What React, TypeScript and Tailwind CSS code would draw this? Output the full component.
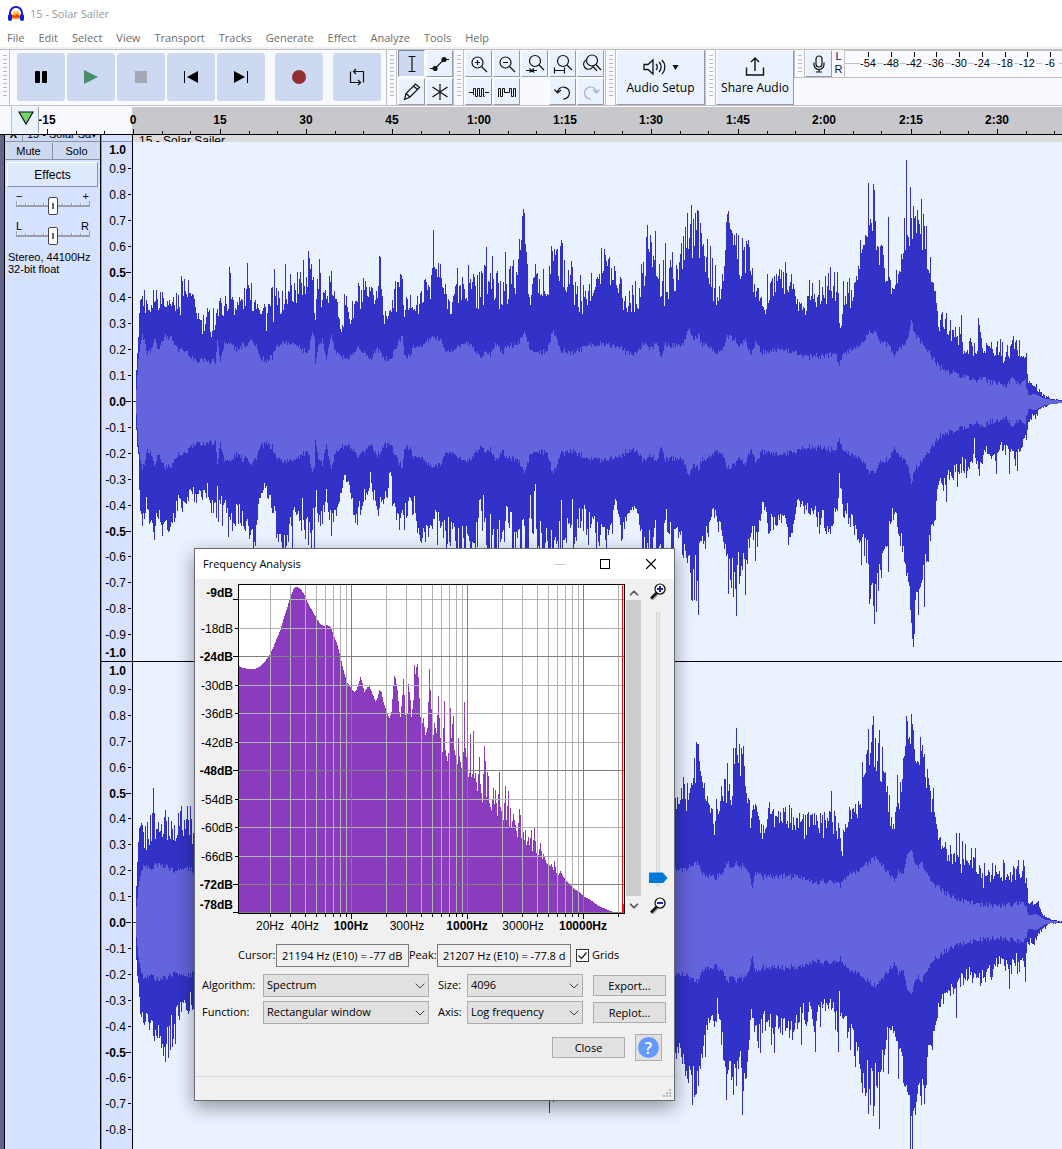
import React from 'react';
import { ChevronDown, ChevronUp, X } from 'lucide-react';

// ---------------------------------------------------------------------------
// Waveform data. Envelopes are flat lists of [x, near, far]: the column height
// at x falls somewhere between "near" and "far". Spikes are [x, y].
// ---------------------------------------------------------------------------

const LEFT_TOP = [
  136, 370, 368, 138, 335, 330, 139, 316, 310, 141, 300, 290, 150, 315, 296, 152, 302, 285, 160, 304, 290, 163, 302, 285,
  167, 306, 300, 175, 307, 295, 179, 315, 297, 181, 300, 276, 188, 300, 280, 193, 307, 297, 199, 323, 315, 202, 333, 320,
  209, 333, 310, 214, 325, 305, 220, 312, 300, 225, 312, 298, 230, 300, 275, 235, 312, 300, 245, 306, 290, 249, 305, 285,
  258, 307, 300, 262, 318, 302, 270, 327, 295, 275, 305, 290, 280, 310, 297, 288, 302, 290, 295, 298, 275, 300, 297, 275,
  305, 290, 270, 308, 280, 255, 312, 280, 262, 315, 327, 320, 318, 310, 270, 322, 292, 272, 326, 306, 295, 331, 290, 276,
  336, 310, 300, 342, 327, 300, 346, 303, 297, 350, 325, 310, 355, 310, 298, 358, 308, 288, 362, 310, 285, 370, 306, 292,
  377, 300, 285, 380, 290, 270, 384, 320, 310, 390, 310, 300, 396, 304, 285, 401, 278, 275, 405, 325, 300, 410, 305, 297,
  418, 313, 300, 423, 297, 285, 430, 290, 270, 433, 270, 265, 440, 285, 265, 444, 300, 285, 450, 310, 300, 460, 300, 275,
  470, 300, 280, 475, 300, 275, 482, 300, 270, 487, 290, 265, 492, 300, 270, 500, 308, 280, 508, 293, 265, 515, 288, 268,
  520, 263, 240, 523, 215, 209, 526, 265, 240, 529, 310, 300, 535, 275, 264, 540, 300, 285, 547, 308, 285, 551, 262, 250,
  555, 255, 250, 560, 285, 255, 565, 280, 250, 572, 290, 270, 578, 310, 290, 585, 305, 290, 592, 290, 275, 600, 275, 255,
  605, 275, 255, 613, 280, 262, 620, 290, 275, 626, 314, 295, 630, 305, 285, 637, 305, 288, 644, 290, 265, 648, 255, 235,
  655, 265, 250, 660, 300, 275, 667, 290, 260, 673, 290, 275, 680, 268, 250, 686, 245, 222, 692, 255, 225, 698, 245, 215,
  702, 255, 245, 708, 275, 245, 714, 295, 270, 718, 305, 290, 724, 280, 265, 728, 225, 218, 733, 250, 232, 740, 272, 240,
  748, 265, 245, 753, 290, 275, 760, 302, 295, 764, 316, 310, 770, 295, 285, 778, 290, 270, 785, 290, 270, 792, 290, 278,
  798, 310, 305, 805, 310, 295, 812, 300, 285, 820, 300, 285, 830, 295, 275, 836, 300, 275, 840, 328, 320, 845, 300, 290,
  850, 300, 280, 856, 283, 275, 863, 248, 240, 866, 240, 232, 871, 230, 218, 875, 240, 220, 880, 260, 240, 886, 278, 255,
  891, 295, 288, 897, 280, 270, 903, 255, 240, 908, 240, 220, 914, 237, 215, 920, 240, 213, 924, 245, 220, 930, 275, 260,
  935, 300, 290, 938, 333, 325, 942, 322, 312, 948, 335, 320, 953, 337, 327, 960, 345, 332, 966, 352, 338, 974, 352, 342,
  980, 348, 332, 986, 350, 340, 992, 354, 345, 1000, 352, 342, 1006, 365, 350, 1012, 352, 338, 1018, 354, 340, 1024, 360, 350,
  1026, 362, 352, 1028, 384, 381, 1035, 388, 383, 1040, 394, 391, 1045, 397, 395, 1050, 399, 398, 1062, 401, 400,
];
const LEFT_TOP_SPIKES = [
  229, 267, 247, 263, 274, 269, 285, 264, 303, 260, 308, 251, 309, 258, 379, 256, 380, 257, 433, 230, 486, 247, 492, 256,
  505, 252, 521, 240, 523, 209, 524, 213, 535, 264, 551, 246, 560, 246, 561, 240, 601, 248, 604, 249, 647, 225, 646, 237,
  655, 231, 665, 243, 672, 252, 687, 213, 691, 205, 697, 210, 698, 211, 726, 222, 727, 214, 728, 211, 731, 230, 736, 233,
  785, 262, 830, 267, 837, 272, 860, 240, 868, 183, 870, 219, 873, 184, 874, 190, 888, 217, 904, 218, 906, 160, 910, 187,
  913, 206, 917, 210, 921, 199, 924, 226, 961, 315, 978, 318, 979, 325, 181, 276, 188, 280, 290, 274, 320, 273, 329, 276,
  358, 283, 388, 316, 400, 274, 457, 268, 468, 265, 481, 271, 509, 269, 543, 269, 580, 275, 632, 285, 641, 264, 715, 265,
  767, 274, 778, 276, 791, 274, 809, 280, 825, 276, 840, 328, 841, 326, 843, 281, 849, 278,
];
const LEFT_BOTTOM = [
  136, 430, 432, 138, 455, 460, 139, 490, 500, 142, 520, 528, 146, 500, 510, 150, 515, 525, 154, 525, 540, 157, 505, 515,
  162, 520, 535, 170, 525, 530, 178, 500, 515, 182, 505, 512, 190, 488, 495, 198, 495, 505, 205, 485, 495, 212, 495, 510,
  216, 500, 515, 220, 500, 520, 228, 510, 520, 232, 510, 528, 240, 505, 520, 245, 515, 530, 252, 530, 546, 255, 540, 546,
  258, 500, 505, 263, 482, 490, 270, 497, 503, 275, 515, 540, 282, 545, 560, 287, 530, 545, 293, 510, 515, 300, 510, 525,
  307, 520, 540, 311, 530, 545, 315, 495, 510, 320, 515, 525, 328, 500, 510, 331, 520, 535, 338, 500, 505, 345, 470, 475,
  350, 490, 505, 357, 510, 525, 363, 495, 505, 370, 480, 490, 376, 500, 515, 382, 500, 505, 390, 475, 490, 394, 505, 515,
  400, 510, 530, 408, 500, 520, 415, 510, 520, 420, 540, 548, 430, 515, 530, 437, 515, 540, 443, 530, 550, 450, 520, 545,
  460, 530, 560, 470, 530, 555, 476, 530, 555, 480, 500, 510, 488, 530, 570, 500, 530, 560, 507, 510, 520, 515, 530, 560,
  525, 530, 560, 535, 500, 545, 540, 530, 560, 545, 530, 550, 555, 550, 600, 565, 520, 550, 575, 520, 540, 585, 510, 530,
  595, 520, 545, 600, 530, 545, 608, 530, 550, 615, 505, 520, 623, 530, 550, 630, 505, 510, 636, 508, 512, 643, 540, 555,
  655, 530, 570, 665, 520, 550, 672, 530, 560, 680, 530, 540, 687, 560, 580, 692, 570, 600, 697, 560, 590, 700, 535, 540,
  706, 530, 545, 712, 505, 510, 718, 520, 530, 724, 540, 550, 730, 560, 590, 735, 560, 590, 740, 560, 575, 745, 560, 585,
  750, 530, 540, 757, 530, 540, 763, 500, 505, 768, 520, 530, 778, 515, 525, 786, 520, 530, 792, 525, 540, 797, 498, 500,
  803, 505, 515, 812, 510, 520, 822, 515, 530, 830, 515, 530, 837, 510, 515, 839, 475, 480, 843, 500, 515, 850, 515, 530,
  860, 540, 550, 866, 540, 560, 870, 570, 595, 874, 575, 600, 880, 565, 580, 887, 540, 550, 891, 510, 520, 897, 515, 525,
  903, 550, 570, 908, 560, 590, 912, 600, 635, 917, 590, 610, 922, 570, 590, 925, 560, 580, 930, 535, 550, 934, 520, 530,
  938, 480, 485, 942, 480, 490, 950, 470, 480, 960, 460, 470, 967, 462, 475, 974, 450, 455, 979, 465, 473, 985, 450, 458,
  992, 450, 462, 1000, 445, 455, 1008, 450, 458, 1016, 455, 465, 1022, 445, 450, 1026, 430, 440, 1028, 420, 428,
  1035, 415, 420, 1040, 408, 410, 1050, 403, 404, 1062, 402, 402,
];
const LEFT_BOTTOM_SPIKES = [
  154, 540, 217, 486, 292, 549, 314, 548, 316, 490, 530, 495, 691, 600, 692, 601, 698, 615, 728, 594, 736, 616, 745, 595,
  839, 473, 869, 604, 874, 624, 876, 612, 888, 572, 910, 610, 913, 647, 914, 634, 918, 615, 924, 607, 946, 502, 957, 487,
  974, 438, 979, 476, 1009, 474, 1017, 471, 228, 537, 302, 498, 326, 489, 331, 536, 370, 472, 390, 472, 391, 476, 399, 530,
  414, 496, 479, 500, 483, 495, 506, 506, 534, 491, 561, 500, 572, 499, 588, 545, 616, 501, 755, 561, 757, 547, 768, 534,
  788, 545, 819, 534, 830, 534, 861, 565, 996, 474,
];
const LEFT_RMS = [
  136, 390, 138, 360, 140, 345, 142, 337, 144, 340, 147, 355, 151, 350, 154, 340, 158, 350, 161, 343, 165, 336, 172, 340,
  178, 350, 182, 347, 190, 357, 197, 360, 205, 361, 215, 362, 217, 342, 220, 360, 224, 345, 230, 342, 236, 350, 242, 345,
  246, 348, 251, 340, 256, 347, 260, 357, 266, 360, 272, 357, 276, 346, 283, 343, 290, 343, 297, 347, 303, 350, 308, 350,
  312, 335, 314, 337, 315, 362, 319, 342, 322, 340, 326, 358, 331, 338, 335, 350, 340, 357, 348, 358, 354, 351, 358, 345,
  363, 352, 371, 360, 376, 350, 379, 350, 382, 358, 390, 360, 399, 340, 402, 338, 404, 357, 410, 355, 414, 345, 420, 348,
  425, 342, 432, 336, 440, 341, 447, 352, 455, 350, 463, 342, 470, 345, 475, 350, 481, 358, 486, 350, 490, 355, 495, 345,
  502, 352, 508, 345, 515, 346, 520, 340, 524, 331, 530, 350, 537, 352, 545, 352, 549, 345, 552, 330, 556, 340, 560, 350,
  570, 353, 580, 350, 590, 346, 600, 344, 610, 346, 620, 348, 628, 354, 636, 353, 642, 345, 650, 348, 656, 345, 661, 355,
  665, 345, 672, 346, 682, 345, 686, 335, 690, 330, 694, 340, 698, 335, 702, 345, 710, 348, 716, 352, 722, 350, 727, 336,
  735, 340, 740, 345, 745, 340, 750, 354, 755, 343, 762, 352, 770, 350, 785, 350, 795, 353, 805, 357, 820, 356, 835, 354,
  839, 365, 844, 353, 852, 350, 862, 342, 870, 332, 874, 332, 880, 342, 888, 345, 894, 357, 900, 348, 907, 340, 911, 322,
  915, 335, 920, 342, 928, 350, 932, 358, 940, 368, 950, 372, 960, 376, 970, 378, 975, 383, 980, 377, 990, 382, 1000, 383,
  1006, 386, 1012, 378, 1018, 384, 1025, 380, 1028, 395, 1035, 394, 1045, 399, 1062, 401,
];

const RIGHT_TOP = [
  136, 885, 880, 139, 832, 824, 145, 845, 825, 152, 835, 815, 160, 838, 820, 170, 838, 815, 180, 830, 812, 190, 832, 812,
  195, 840, 820, 675, 812, 800, 680, 820, 798, 683, 795, 780, 686, 808, 790, 690, 790, 770, 694, 788, 757, 697, 760, 745,
  700, 775, 760, 704, 795, 785, 710, 812, 808, 716, 828, 805, 721, 805, 795, 726, 800, 775, 731, 805, 792, 735, 765, 750,
  738, 765, 742, 742, 772, 750, 745, 780, 762, 750, 824, 808, 756, 806, 803, 762, 842, 830, 768, 814, 805, 778, 827, 815,
  785, 824, 810, 795, 824, 810, 802, 840, 820, 810, 827, 815, 820, 832, 815, 825, 835, 818, 832, 826, 808, 838, 835, 820,
  842, 850, 830, 847, 825, 812, 852, 815, 808, 858, 815, 803, 863, 790, 768, 867, 760, 745, 872, 760, 735, 876, 767, 745,
  880, 775, 755, 884, 785, 770, 890, 820, 805, 894, 830, 820, 900, 800, 785, 905, 752, 745, 908, 748, 740, 912, 750, 730,
  918, 768, 752, 923, 765, 748, 928, 795, 775, 934, 818, 810, 938, 840, 830, 944, 854, 845, 950, 862, 848, 955, 867, 857,
  962, 872, 860, 968, 866, 850, 975, 868, 855, 982, 877, 865, 990, 877, 864, 997, 882, 870, 1005, 877, 865, 1015, 877, 867,
  1022, 878, 866, 1026, 885, 875, 1028, 904, 902, 1033, 904, 900, 1038, 906, 902, 1042, 915, 914, 1050, 920, 919, 1062, 922, 921,
];
const RIGHT_TOP_SPIKES = [
  153, 788, 150, 815, 165, 810, 677, 797, 683, 777, 694, 758, 696, 742, 698, 744, 727, 763, 733, 748, 736, 728, 739, 744,
  743, 746, 831, 791, 862, 762, 868, 729, 873, 716, 872, 725, 879, 730, 882, 747, 897, 775, 900, 782, 906, 716, 907, 721,
  911, 714, 912, 724, 920, 737, 922, 745, 933, 788, 956, 833, 959, 833, 962, 841, 965, 844, 975, 848, 1003, 860, 1018, 860,
  1023, 860, 1024, 866, 842, 856, 714, 835, 983, 888, 769, 802, 784, 812, 791, 808, 803, 814, 814, 813, 721, 786, 755, 804,
];
const RIGHT_BOTTOM = [
  136, 960, 962, 140, 1010, 1020, 150, 1020, 1030, 156, 1030, 1045, 163, 1035, 1058, 170, 1025, 1050, 178, 1010, 1030,
  187, 1000, 1018, 195, 995, 1012, 548, 1100, 1102, 675, 1050, 1060, 680, 1045, 1055, 687, 1070, 1080, 693, 1070, 1095,
  698, 1075, 1085, 703, 1030, 1045, 710, 1015, 1020, 716, 1020, 1040, 718, 1008, 1015, 722, 1035, 1050, 727, 1070, 1085,
  733, 1060, 1085, 740, 1060, 1080, 745, 1080, 1090, 748, 1050, 1060, 751, 1008, 1010, 757, 1030, 1050, 763, 1015, 1025,
  770, 1020, 1040, 780, 1022, 1035, 790, 1020, 1040, 800, 1010, 1020, 808, 1008, 1030, 816, 1010, 1030, 824, 1003, 1015,
  830, 1003, 1015, 838, 1015, 1040, 842, 1010, 1020, 850, 1030, 1045, 858, 1040, 1060, 863, 1075, 1090, 868, 1065, 1095,
  874, 1075, 1100, 880, 1065, 1090, 885, 1035, 1050, 890, 1030, 1045, 894, 1025, 1030, 898, 1050, 1060, 903, 1055, 1080,
  907, 1095, 1105, 911, 1105, 1125, 916, 1095, 1108, 921, 1080, 1100, 925, 1090, 1100, 928, 1045, 1050, 933, 1030, 1040,
  938, 1000, 1010, 945, 992, 1000, 952, 985, 995, 960, 975, 985, 970, 970, 980, 980, 972, 983, 990, 968, 980, 998, 958, 965,
  1005, 963, 972, 1015, 958, 972, 1025, 963, 970, 1027, 940, 945, 1033, 940, 945, 1040, 930, 932, 1050, 923, 924, 1062, 923, 923,
];
const RIGHT_BOTTOM_SPIKES = [
  165, 1062, 549, 1113, 553, 1102, 692, 1105, 717, 998, 726, 1100, 733, 1095, 742, 1115, 838, 1052, 839, 991, 862, 1093,
  868, 1114, 873, 1116, 879, 1129, 888, 1074, 898, 1079, 910, 1149, 912, 1149, 956, 1018, 1009, 989, 1025, 982,
  705, 1057, 760, 1053, 774, 1053, 815, 1052, 855, 1067, 801, 1045, 932, 1050,
];
const RIGHT_RMS = [
  136, 905, 138, 885, 143, 865, 150, 868, 157, 865, 165, 866, 175, 872, 185, 867, 195, 872, 675, 870, 685, 870, 692, 863,
  697, 863, 702, 873, 710, 877, 716, 877, 722, 872, 727, 862, 732, 870, 736, 862, 740, 868, 743, 864, 748, 873, 752, 887,
  755, 872, 762, 877, 785, 876, 800, 878, 815, 882, 835, 882, 840, 885, 848, 876, 856, 872, 863, 866, 868, 863, 875, 858,
  880, 862, 887, 872, 895, 881, 898, 870, 902, 875, 906, 858, 911, 851, 917, 868, 922, 863, 928, 878, 935, 885, 945, 893,
  960, 900, 975, 903, 985, 905, 1000, 905, 1008, 905, 1015, 903, 1025, 905, 1028, 915, 1036, 914, 1045, 920, 1062, 922,
];

const WAVE_START = 136;
const WAVE_END = 1062;

const noise = (n: number) => {
  const v = Math.sin(n * 127.1 + 311.7) * 43758.5453;
  return v - Math.floor(v);
};

// Linear interpolation over a flat list with `size` numbers per entry
const sample = (list: number[], size: number, x: number, field: number) => {
  let i = 0;
  while (i + size < list.length && list[i + size] <= x) i += size;
  if (i + size >= list.length) return list[i + field];
  const t = Math.max(0, (x - list[i]) / (list[i + size] - list[i]));
  return list[i + field] + (list[i + size + field] - list[i + field]) * t;
};

const peakColumns = (env: number[], spikes: number[], seed: number) => {
  const out: number[] = [];
  for (let x = WAVE_START; x < WAVE_END; x++) {
    const near = sample(env, 3, x, 1);
    const far = sample(env, 3, x, 2);
    const r = noise(x + seed);
    out.push(Math.round(near + (far - near) * (r * 1.8 - 0.45)));
  }
  for (let i = 0; i < spikes.length; i += 2) out[spikes[i] - WAVE_START] = spikes[i + 1];
  return out;
};

const rmsColumns = (env: number[], seed: number) => {
  const out: number[] = [];
  for (let x = WAVE_START; x < WAVE_END; x++) {
    const wobble = x < 1027 ? (noise(x + seed) - 0.5) * 6 : 0;
    out.push(Math.round(sample(env, 2, x, 1) + wobble));
  }
  return out;
};

const bandPath = (top: number[], bottom: number[]) => {
  let d = `M${WAVE_START} ${top[0]}`;
  top.forEach((y, i) => (d += `V${y}H${WAVE_START + i + 1}`));
  for (let i = bottom.length - 1; i >= 0; i--) d += `V${bottom[i]}H${WAVE_START + i}`;
  return d + 'Z';
};

const mirror = (cols: number[], centre: number) => cols.map((y) => centre * 2 - y);

const leftRms = rmsColumns(LEFT_RMS, 11);
const rightRms = rmsColumns(RIGHT_RMS, 57);

const CHANNELS = [
  {
    centre: 401,
    labels: 21,
    peak: bandPath(peakColumns(LEFT_TOP, LEFT_TOP_SPIKES, 1), peakColumns(LEFT_BOTTOM, LEFT_BOTTOM_SPIKES, 900)),
    rms: bandPath(leftRms, mirror(leftRms, 402)),
  },
  {
    centre: 922,
    labels: 19,
    peak: bandPath(peakColumns(RIGHT_TOP, RIGHT_TOP_SPIKES, 333), peakColumns(RIGHT_BOTTOM, RIGHT_BOTTOM_SPIKES, 77)),
    rms: bandPath(rightRms, mirror(rightRms, 922)),
  },
];

// Spectrum outline, [x, y]
const SPECTRUM = [
  239, 666, 243, 668, 248, 669, 254, 669, 259, 667, 263, 663, 267, 658, 270, 653, 273, 647, 276, 639, 280, 630, 283, 619,
  286, 610, 289, 600, 291, 594, 293, 589, 295, 587, 297, 587, 300, 589, 303, 593, 305, 597, 308, 604, 312, 611, 316, 618,
  319, 623, 323, 626, 327, 625, 330, 627, 333, 634, 337, 645, 340, 657, 343, 670, 346, 681, 349, 686, 352, 690, 354, 692,
  356, 690, 358, 684, 360, 677, 362, 683, 364, 692, 367, 687, 369, 686, 372, 694, 375, 701, 377, 698, 379, 690, 381, 692,
  383, 702, 386, 711, 389, 718, 391, 712, 393, 685, 394, 676, 395, 678, 397, 690, 399, 712, 400, 717, 402, 695, 403, 679,
  404, 695, 405, 715, 407, 714, 408, 684, 410, 700, 411, 717, 413, 700, 414, 665, 415, 674, 416, 667, 417, 664, 418, 677,
  419, 698, 420, 717, 422, 723, 423, 718, 425, 735, 427, 728, 428, 702, 429, 669, 430, 690, 431, 709, 433, 735, 434, 723,
  436, 733, 437, 715, 438, 696, 439, 718, 440, 738, 442, 752, 443, 728, 444, 701, 445, 750, 447, 761, 449, 745, 450, 708,
  451, 738, 452, 724, 453, 716, 454, 750, 457, 764, 458, 738, 459, 756, 461, 768, 463, 752, 464, 702, 465, 748, 467, 765,
  468, 777, 469, 773, 470, 734, 471, 777, 472, 774, 473, 731, 474, 778, 475, 773, 477, 791, 479, 757, 480, 784, 482, 802,
  484, 746, 485, 761, 486, 797, 487, 772, 488, 776, 489, 803, 491, 810, 493, 788, 494, 804, 495, 790, 497, 816, 499, 772,
  500, 807, 503, 820, 505, 786, 506, 820, 508, 791, 509, 826, 510, 808, 511, 827, 513, 814, 515, 825, 517, 837, 519, 809,
  520, 815, 521, 838, 522, 824, 524, 840, 525, 830, 526, 845, 528, 837, 529, 845, 531, 830, 532, 851, 534, 828, 536, 853,
  538, 855, 540, 843, 542, 859, 543, 854, 546, 863, 550, 866, 551, 864, 553, 870, 554, 861, 556, 873, 558, 875, 560, 871,
  563, 877, 566, 881, 570, 885, 573, 888, 577, 891, 580, 893, 583, 896, 590, 900, 597, 905, 603, 908, 610, 911, 614, 912,
];

// One column per pixel: slopes on the smooth low end, plain bars above 380
const spectrumPath = () => {
  let d = 'M239 913';
  for (let x = 239; x < 618; x++) {
    const exact = SPECTRUM.findIndex((v, i) => i % 2 === 0 && v === x);
    const y = exact >= 0 ? SPECTRUM[exact + 1] : Math.round(sample(SPECTRUM, 2, x, 1));
    d += `V${y}H${x + 1}`;
  }
  return d + 'V913Z';
};

const DECIBELS = [-9, -18, -24, -30, -36, -42, -48, -54, -60, -66, -72, -78];
const DB_LINES = [599, 628, 656, 685, 713, 742, 770, 799, 827, 856, 884, 912];
const DB_BOLD = [-9, -24, -48, -72, -78];
const FREQ_LABELS = [
  { text: '20Hz', x: 270, bold: false },
  { text: '40Hz', x: 305, bold: false },
  { text: '100Hz', x: 351, bold: true },
  { text: '300Hz', x: 407, bold: false },
  { text: '1000Hz', x: 467, bold: true },
  { text: '3000Hz', x: 523, bold: false },
  { text: '10000Hz', x: 583, bold: true },
];
const FREQ_LINES = [10, 100, 1000, 10000].flatMap((decade) =>
  [1, 2, 3, 4, 5, 6, 7, 8, 9]
    .map((n) => n * decade)
    .filter((f) => f > 15 && f < 21000)
    .map((f) => ({ x: Math.round(351 + 116 * (Math.log10(f) - 2)), major: f === decade }))
);

const MENUS = ['File', 'Edit', 'Select', 'View', 'Transport', 'Tracks', 'Generate', 'Effect', 'Analyze', 'Tools', 'Help'];
const TIMES = ['-15', '0', '15', '30', '45', '1:00', '1:15', '1:30', '1:45', '2:00', '2:15', '2:30'];

// ---------------------------------------------------------------------------
// Toolbar
// ---------------------------------------------------------------------------

const Grabber: React.FC<{ lines?: number }> = ({ lines = 11 }) => (
  <div className="flex w-[10px] shrink-0 flex-col items-center gap-[3px] border-r border-[#c0c0c0] pt-[5px]">
    {Array.from({ length: lines }, (_, i) => (
      <div key={i} className="h-px w-1 shrink-0 bg-[#b9bcc6]" />
    ))}
  </div>
);

const TransportButton: React.FC<{ label: string; children: React.ReactNode }> = ({ label, children }) => (
  <button aria-label={label} className="flex size-12 items-center justify-center rounded-[3px] bg-[#cdd9f1]">
    <svg width="24" height="24" viewBox="0 0 24 24">{children}</svg>
  </button>
);

const ToolButton: React.FC<{ label: string; active?: boolean; children: React.ReactNode }> = ({ label, active, children }) => (
  <button
    aria-label={label}
    className={`flex size-[27px] items-center justify-center border ${
      active ? 'border-[#7b859f] border-r-white border-b-white bg-[#cdd9f1]' : 'border-white border-r-[#939bb0] border-b-[#939bb0] bg-[#eaf1ff]'
    }`}
  >
    <svg width="24" height="24" viewBox="0 0 24 24" fill="none" stroke="#111" strokeWidth="1.2">
      {children}
    </svg>
  </button>
);

const Toolbar = () => (
  <div className="flex h-[57px] shrink-0 overflow-hidden border-y border-[#c0c0c0] bg-[#f8faff]">
    <Grabber />
    <div className="flex shrink-0 items-start gap-[2px] pt-[3px] pr-[5px] pl-[7px]">
      <TransportButton label="Pause">
        <rect x="6" y="6" width="5" height="12" rx="1" />
        <rect x="13" y="6" width="5" height="12" rx="1" />
      </TransportButton>
      <TransportButton label="Play">
        <path d="M5 5v14l14-7z" fill="#4a8d6e" />
      </TransportButton>
      <TransportButton label="Stop">
        <rect x="6" y="6" width="12" height="12" fill="#a5a9b5" />
      </TransportButton>
      <TransportButton label="Skip to Start">
        <path d="M5 6h1v12H5zM19 6v12L8 12z" />
      </TransportButton>
      <TransportButton label="Skip to End">
        <path d="M18 6h1v12h-1zM5 6v12l11-6z" />
      </TransportButton>
      <div className="mx-2">
        <TransportButton label="Record">
          <circle cx="12" cy="12" r="7" fill="#932f30" />
        </TransportButton>
      </div>
      <TransportButton label="Loop">
        <path
          d="M8.5 6.500H18.500V17.500M15.500 17.500H5.500V6.500M11 4L8.500 6.500L11 9M13 15L15.500 17.500L13 20"
          fill="none"
          stroke="#111"
          strokeWidth="1.200"
        />
      </TransportButton>
    </div>
    <div className="flex shrink-0 border-l border-[#c0c0c0]">
      <Grabber />
      <div className="grid shrink-0 grid-cols-2 content-start gap-px pl-px">
        <ToolButton label="Selection Tool" active>
          <path d="M8.500 4.500h7M8.500 19.500h7M12 4.500v15" />
        </ToolButton>
        <ToolButton label="Envelope Tool">
          <path d="M2 16.500h5L16 7.500h5" />
          <circle cx="7" cy="16.500" r="2" fill="#111" />
          <circle cx="16" cy="7.500" r="2" fill="#111" />
        </ToolButton>
        <ToolButton label="Draw Tool">
          <path d="M4.500 19.500l1.500-6L15.500 4l4 3.500L10 17zM13.500 6l4 3.500M6 13.500l4 3.500" />
        </ToolButton>
        <ToolButton label="Multi-Tool">
          <path d="M12 4v16M4.500 7l15 10M19.500 7l-15 10" />
        </ToolButton>
      </div>
    </div>
    <div className="flex shrink-0 border-l border-[#c0c0c0]">
      <Grabber />
      <div className="grid shrink-0 grid-cols-5 content-start gap-px px-px">
        <ToolButton label="Zoom In">
          <circle cx="10.500" cy="10.500" r="5.500" />
          <path d="M14.500 14.500l5.500 5.500M8 10.500h5M10.500 8v5" />
        </ToolButton>
        <ToolButton label="Zoom Out">
          <circle cx="10.500" cy="10.500" r="5.500" />
          <path d="M14.500 14.500l5.500 5.500M8 10.500h5" />
        </ToolButton>
        <ToolButton label="Fit Selection to Width">
          <circle cx="12" cy="9" r="5.500" />
          <path d="M16 13l5 5M3 18.500h5M9 18.500h5M6.500 16.500l2 2-2 2M11 16.500l-2 2 2 2" />
        </ToolButton>
        <ToolButton label="Fit Project to Width">
          <circle cx="12" cy="9" r="5.500" />
          <path d="M16 13l5 5M3.500 18.500h10M3.500 15.500v6M13.500 15.500v6" />
        </ToolButton>
        <ToolButton label="Zoom Toggle">
          <circle cx="13" cy="8.500" r="5.500" />
          <path d="M17 12.500l5 5.500M8 7.500a5 5 0 1 0 6 7l4 4.500M14 14.500l4 4.500" />
        </ToolButton>
        <ToolButton label="Trim">
          <path d="M2 12.500h4M18 12.500h4M6.500 15V8.500h2v8h2v-8h2v8h2v-8h2v8h1" strokeWidth="1" />
        </ToolButton>
        <ToolButton label="Silence">
          <path d="M3.500 17V8.500h2v8h2v-8h2v4h5v-4h2v8h2v-8h2V17" strokeWidth="1" />
        </ToolButton>
        <div />
        <ToolButton label="Undo">
          <path d="M12 19h1a6 6 0 1 0-6.500-6.500M3.500 9.500l3 3.500 3.500-3" />
        </ToolButton>
        <ToolButton label="Redo">
          <path d="M12 19h-1a6 6 0 1 1 6.500-6.500M20.500 9.500l-3 3.500-3.500-3" stroke="#aab0bd" />
        </ToolButton>
      </div>
    </div>
    <div className="flex shrink-0 border-l border-[#c0c0c0]">
      <Grabber />
      <button className="flex w-[89px] flex-col items-center border border-white border-r-[#939bb0] border-b-[#939bb0] bg-[#eaf1ff] pt-[3px] font-['Open_Sans',sans-serif] text-[12px] leading-4">
        <svg width="40" height="26" viewBox="0 0 40 26" fill="none" stroke="#111" strokeWidth="1.300">
          <path d="M3 10.500h4l5-4.500v14l-5-4.500h-4zM15 10a4 4 0 0 1 0 6M18 8a7 7 0 0 1 0 10M21 6a10 10 0 0 1 0 14" />
          <path d="M31.500 11h6l-3 5z" fill="#111" stroke="none" />
        </svg>
        Audio Setup
      </button>
    </div>
    <div className="flex shrink-0 border-l border-[#c0c0c0]">
      <Grabber />
      <button className="flex w-[78px] flex-col items-center border border-white border-r-[#939bb0] border-b-[#939bb0] bg-[#eaf1ff] pt-[3px] font-['Open_Sans',sans-serif] text-[12px] leading-4">
        <svg width="24" height="26" viewBox="0 0 24 26" fill="none" stroke="#111" strokeWidth="1.400">
          <path d="M3.500 13.500v7.500h17v-7.500M12 17V4.500M8 8l4-4 4 4" />
        </svg>
        <span className="whitespace-nowrap">Share Audio</span>
      </button>
    </div>
    <div className="flex h-7 min-w-0 flex-1 border-b border-l border-[#c0c0c0]">
      <Grabber lines={5} />
      <ToolButton label="Record Meter">
        <rect x="9" y="4" width="6" height="11" rx="3" />
        <path d="M7 10.500v2a5 5 0 0 0 10 0v-2M12 17.500v2.500M9 20h6" />
      </ToolButton>
      <div className="flex w-3 flex-col items-center pl-px font-['Liberation_Sans',sans-serif] text-[11px] leading-[13px] text-[#101040]">
        <span>L</span>
        <span>R</span>
      </div>
      <svg className="h-full min-w-0 flex-1 font-['Liberation_Sans',sans-serif] text-[11px]" shapeRendering="crispEdges">
        <path d="M0 .5H400M.5 0V28M0 13.500H400" stroke="#c0c0c0" fill="none" />
        {[-54, -48, -42, -36, -30, -24, -18, -12, -6].map((db, i) => (
          <g key={db}>
            <path d={`M${Math.round(24 + i * 22.750)}.5 2v5`} stroke="#000" />
            <rect x={Math.round(24 + i * 22.750) - 8} y="12" width="17" height="3" fill="#f8faff" />
            <text x={Math.round(24 + i * 22.750)} y="17" textAnchor="middle">
              {db}
            </text>
          </g>
        ))}
      </svg>
    </div>
  </div>
);

// ---------------------------------------------------------------------------
// Tracks
// ---------------------------------------------------------------------------

const Timeline = () => (
  <div className="flex h-[29px] shrink-0 border-b border-black bg-[#f8faff]">
    <div className="w-3 shrink-0 border-r border-[#c0c0c0]" />
    <button aria-label="Pin play head" className="my-px flex w-[27px] shrink-0 justify-center border-r border-[#939bb0] bg-[#eaf1ff] pt-1 pl-[2px]">
      <svg width="16" height="14" viewBox="0 0 16 14">
        <path d="M1 1h14L8 13z" fill="#74d46c" stroke="#111" strokeWidth="1.200" />
      </svg>
    </button>
    <svg className="h-full min-w-0 flex-1 font-['Liberation_Sans',sans-serif] text-[12px] font-bold" shapeRendering="crispEdges">
      <rect x="93" y="1" width="3000" height="27" fill="#c8c8cc" />
      {TIMES.map((t, i) => {
        const x = Math.round(8 + i * 86.350);
        return (
          <g key={t}>
            <text x={x} y="18" textAnchor="middle">
              {t}
            </text>
            <path d={`M${x}.5 23v5M${x + 29}.5 25v3M${x + 57}.5 25v3`} stroke="#000" />
          </g>
        );
      })}
    </svg>
  </div>
);

const TrackSlider: React.FC<{ label: string; low: string; high: string }> = ({ label, low, high }) => (
  <div className="relative mx-[10px] h-[30px] text-[11px] leading-[13px]">
    <div className="flex justify-between px-px">
      <span>{low}</span>
      <span>{high}</span>
    </div>
    <svg className="absolute inset-x-0 top-[10px] h-[7px] w-full" shapeRendering="crispEdges">
      <path d="M1 6h76" stroke="#9a9fa8" strokeWidth="2" />
      <path d="M2.500 1v4M11.500 3v2M20.500 3v2M29.500 3v2M48.500 3v2M57.500 3v2M66.500 3v2M75.500 1v4" stroke="#fff" />
      <path d="M1.500 1v4M10.500 3v2M19.500 3v2M28.500 3v2M47.500 3v2M56.500 3v2M65.500 3v2M74.500 1v4" stroke="#9a9fa8" />
    </svg>
    <input
      type="range"
      aria-label={label}
      defaultValue={50}
      className="absolute inset-x-0 top-[6px] h-5 w-full appearance-none bg-transparent [&::-webkit-slider-thumb]:h-[18px] [&::-webkit-slider-thumb]:w-[10px] [&::-webkit-slider-thumb]:appearance-none [&::-webkit-slider-thumb]:rounded-[2px] [&::-webkit-slider-thumb]:border [&::-webkit-slider-thumb]:border-[#444] [&::-webkit-slider-thumb]:bg-[linear-gradient(#666,#666)] [&::-webkit-slider-thumb]:bg-[length:2px_6px] [&::-webkit-slider-thumb]:bg-center [&::-webkit-slider-thumb]:bg-no-repeat [&::-webkit-slider-thumb]:bg-white"
    />
  </div>
);

const TrackPanel = () => (
  <div className="flex w-[96px] shrink-0 flex-col border-r border-black bg-[#d6e2ff] font-['Liberation_Sans',sans-serif] text-[11px]">
    <div className="flex h-[7px] items-end overflow-hidden border-b border-[#8a8fa3] bg-[#cdd9f1] leading-[14px]">
      <span className="w-[18px] border-r border-[#8a8fa3] text-center font-bold">X</span>
      <span className="flex-1 pl-1">15 - Solar Sa▾</span>
    </div>
    <div className="flex h-[18px] shrink-0 border-b border-[#8a8fa3] bg-[#cdd9f1] pt-px">
      <button className="w-[48px] border-r border-[#8a8fa3]">Mute</button>
      <button className="flex-1">Solo</button>
    </div>
    <button className="mx-[2px] mt-[2px] mb-[3px] h-[25px] shrink-0 border border-white border-r-[#8a8fa3] border-b-[#8a8fa3] bg-[#e0eaff] text-[12px]">
      Effects
    </button>
    <TrackSlider label="Gain" low="−" high="+" />
    <TrackSlider label="Pan" low="L" high="R" />
    <p className="px-[3px] pt-px leading-3">
      Stereo, 44100Hz
      <br />
      32-bit float
    </p>
  </div>
);

const AmplitudeRuler = () => (
  <svg className="w-[31px] shrink-0 bg-[#d6e2ff] font-['Liberation_Sans',sans-serif] text-[12px]" shapeRendering="crispEdges">
    <path d="M.5 0V1200M0 6.500h31" stroke="#8a8fa3" />
    <path d="M0 526.500h31" stroke="#000" />
    <g transform="translate(0,-135)">
      {CHANNELS.map(({ centre, labels }) =>
        Array.from({ length: labels }, (_, i) => {
          const value = (10 - i) / 10;
          const y = Math.round(centre - value * 259);
          const major = i % 5 === 0;
          const textY = i === 0 ? y + 12 : i === 20 ? y - 3 : y + 5;
          return (
            <g key={`${centre}${i}`}>
              <text x="25" y={textY} textAnchor="end" fontWeight={major ? 700 : 400}>
                {value.toFixed(1)}
              </text>
              {i > 0 && i < 20 && <path d={`M${major ? 25 : 27} ${y}.5H30`} stroke="#000" />}
            </g>
          );
        })
      )}
    </g>
  </svg>
);

const Waveforms = () => (
  <div className="flex min-w-0 flex-1 flex-col border-l border-black bg-[#eaf1ff]">
    <div className="flex h-[7px] shrink-0 items-start overflow-hidden bg-[#dcdcdc] pl-[6px] font-['Liberation_Sans',sans-serif] text-[12px] leading-3">
      15 - Solar Sailer
    </div>
    <svg className="min-h-0 w-full flex-1" shapeRendering="crispEdges">
      <g transform="translate(-133,-142)">
        {CHANNELS.map(({ centre, peak, rms }) => (
          <g key={centre}>
            <path d={`M133 ${centre}.5h930`} stroke="#3232c8" />
            <path d={peak} fill="#3232c8" />
            <path d={rms} fill="#6464dc" />
          </g>
        ))}
        <path d="M133 661.500h2000" stroke="#000" />
      </g>
    </svg>
  </div>
);

// ---------------------------------------------------------------------------
// Frequency Analysis window
// ---------------------------------------------------------------------------

const Magnifier: React.FC<{ plus?: boolean }> = ({ plus }) => (
  <svg width="18" height="18" viewBox="0 0 18 18">
    <path d="M3 16.500l6-6" stroke="#b0b0b0" strokeWidth="3" />
    <path d="M2 15.500l6-6" stroke="#111" strokeWidth="2.500" />
    <circle cx="11.500" cy="6.500" r="5" fill="#f4f4ff" stroke="#a8a8a8" />
    <circle cx="11" cy="6" r="5" fill="#f4f4ff" stroke="#111" strokeWidth="1.200" />
    <path d={plus ? 'M8 6h6M11 3v6' : 'M8 6h6'} stroke="#2424a8" strokeWidth="2" />
  </svg>
);

const SpectrumPlot = () => (
  <svg className="h-[356px] w-[431px] shrink-0 font-['Liberation_Sans',sans-serif] text-[12px]" shapeRendering="crispEdges">
    <g transform="translate(-195,-579)">
      <rect x="238.500" y="584.500" width="386" height="329" fill="#fff" stroke="#000" />
      <path d={spectrumPath()} fill="#8b3bbd" />
      {FREQ_LINES.filter((l) => !l.major).map(({ x }) => (
        <path key={x} d={`M${x}.5 585V913`} stroke="#b2b2b2" />
      ))}
      {DB_LINES.map((y, i) => (
        <path key={y} d={`M239 ${y}.5H624`} stroke={i > 0 && DB_BOLD.includes(DECIBELS[i]) ? '#7f7f7f' : '#b2b2b2'} />
      ))}
      {FREQ_LINES.filter((l) => l.major).map(({ x }) => (
        <path key={x} d={`M${x}.5 585V913`} stroke="#7f7f7f" />
      ))}
      <path d="M622.500 585V913" stroke="#f00" />
      <path d="M623.500 904V912" stroke="#8b3bbd" />
      <path d="M238 913.500H625" stroke="#000" />
      {FREQ_LINES.map(({ x, major }) => (
        <path key={x} d={`M${x}.5 914v${major ? 5 : 3}`} stroke="#000" />
      ))}
      {DECIBELS.map((db, i) => {
        const bold = DB_BOLD.includes(db);
        const y = DB_LINES[i];
        const textY = i === 0 ? 597 : i === DECIBELS.length - 1 ? 909 : y + 5;
        return (
          <g key={db}>
            <text x="233" y={textY} textAnchor="end" fontWeight={bold ? 700 : 400}>
              {db}dB
            </text>
            <path d={`M${bold ? 233 : 235} ${y}.5H238`} stroke="#000" />
          </g>
        );
      })}
      {FREQ_LABELS.map(({ text, x, bold }) => (
        <text key={text} x={x} y="930" textAnchor="middle" fontWeight={bold ? 700 : 400}>
          {text}
        </text>
      ))}
    </g>
  </svg>
);

const Choice: React.FC<{ id: string; value: string; width: string }> = ({ id, value, width }) => (
  <div className={`relative shrink-0 ${width}`}>
    <select id={id} defaultValue={value} className="h-[23px] w-full appearance-none rounded-none border border-[#adadad] bg-[#e1e1e1] pl-[3px]">
      <option>{value}</option>
    </select>
    <ChevronDown className="pointer-events-none absolute top-1 right-px size-4 text-[#444]" strokeWidth={1.5} />
  </div>
);

const PushButton: React.FC<{ children: React.ReactNode }> = ({ children }) => (
  <button className="h-[21px] w-[73px] shrink-0 border border-[#adadad] bg-[#e1e1e1] leading-[18px]">{children}</button>
);

const FrequencyAnalysis = () => (
  <section
    aria-label="Frequency Analysis"
    className="absolute top-[548px] left-[194px] flex h-[553px] w-[481px] flex-col border border-[#666a73] bg-[#f0f0f0] font-['Open_Sans',sans-serif] text-[11px] shadow-[0_6px_18px_rgba(0,0,0,0.4)]"
  >
    <header className="flex h-[30px] shrink-0 items-center bg-white pl-2">
      <h2 className="flex-1">Frequency Analysis</h2>
      <button aria-label="Minimize" className="flex w-[45px] justify-center">
        <span className="h-px w-[10px] bg-[#c8c8c8]" />
      </button>
      <button aria-label="Maximize" className="flex w-[46px] justify-center">
        <span className="size-[10px] border border-black" />
      </button>
      <button aria-label="Close window" className="flex w-[46px] justify-center">
        <X className="size-[18px]" strokeWidth={1.5} />
      </button>
    </header>

    <div className="flex h-[356px] shrink-0">
      <SpectrumPlot />
      <div className="flex h-[337px] w-[15px] shrink-0 flex-col items-center pt-[6px]">
        <div className="flex h-[15px] items-center">
          <ChevronUp className="size-[14px] text-[#555]" strokeWidth={3} />
        </div>
        <div className="w-full flex-1 bg-[#cdcdcd]" />
        <div className="flex h-5 items-center">
          <ChevronDown className="size-[14px] text-[#555]" strokeWidth={3} />
        </div>
      </div>
      <div className="flex h-[336px] flex-1 flex-col items-center gap-[11px] pt-1 pl-px">
        <Magnifier plus />
        <div className="relative flex min-h-0 w-5 flex-1 justify-center">
          <div className="w-1 border border-[#d6d6d6] bg-[#e7eaea]" />
          <input
            type="range"
            aria-label="Vertical zoom"
            defaultValue={1}
            className="absolute inset-0 h-full w-5 appearance-none bg-transparent [direction:rtl] [writing-mode:vertical-lr] [&::-webkit-slider-thumb]:h-[11px] [&::-webkit-slider-thumb]:w-[19px] [&::-webkit-slider-thumb]:appearance-none [&::-webkit-slider-thumb]:bg-[#0078d7] [&::-webkit-slider-thumb]:[clip-path:polygon(0_0,75%_0,100%_50%,75%_100%,0_100%)]"
          />
        </div>
        <Magnifier />
      </div>
    </div>

    <div className="flex items-center pt-[9px] pl-[43px]">
      <label htmlFor="cursor" className="w-[38px]">
        Cursor:
      </label>
      <input id="cursor" readOnly defaultValue="21194 Hz (E10) = -77 dB" className="h-[23px] w-[133px] border border-[#7a7a7a] bg-[#f0f0f0] pl-[5px]" />
      <label htmlFor="peak" className="w-7">
        Peak:
      </label>
      <input id="peak" readOnly defaultValue="21207 Hz (E10) = -77.8 d" className="h-[23px] w-[134px] border border-[#7a7a7a] bg-[#f0f0f0] pl-[5px]" />
      <label className="relative flex items-center gap-[3px] pl-[5px]">
        <input type="checkbox" defaultChecked className="size-[13px] appearance-none border border-[#333] bg-white" />
        <svg className="pointer-events-none absolute left-[5px] size-[13px]" viewBox="0 0 13 13">
          <path d="M2.500 6.500l3 3 5-6" fill="none" stroke="#222" strokeWidth="1.300" />
        </svg>
        Grids
      </label>
    </div>

    <div className="mt-[7px] flex flex-col gap-1 pl-[7px]">
      <div className="flex items-center">
        <label htmlFor="algorithm" className="w-[61px]">
          Algorithm:
        </label>
        <Choice id="algorithm" value="Spectrum" width="w-[166px]" />
        <label htmlFor="size" className="w-[38px] pl-[9px]">
          Size:
        </label>
        <Choice id="size" value="4096" width="w-[116px]" />
        <div className="w-[10px]" />
        <PushButton>Export...</PushButton>
      </div>
      <div className="flex items-center">
        <label htmlFor="function" className="w-[61px]">
          Function:
        </label>
        <Choice id="function" value="Rectangular window" width="w-[166px]" />
        <label htmlFor="axis" className="w-[38px] pl-[9px]">
          Axis:
        </label>
        <Choice id="axis" value="Log frequency" width="w-[116px]" />
        <div className="w-[10px]" />
        <PushButton>Replot...</PushButton>
      </div>
    </div>

    <div className="mt-[10px] flex items-center justify-end gap-[10px] pr-3">
      <PushButton>Close</PushButton>
      <button aria-label="Help" className="flex size-[27px] items-center justify-center border border-[#adadad] bg-[#e1e1e1]">
        <span className="flex size-[21px] items-center justify-center rounded-full bg-[#6699ff] text-[16px] font-semibold text-white">?</span>
      </button>
    </div>

    <footer className="mt-auto flex h-6 items-end justify-end border-t border-[#d5d5d5] p-[2px]">
      <svg width="9" height="9" fill="#bcbcbc" shapeRendering="crispEdges">
        <path d="M6 0h2v2h-2zM6 3h2v2h-2zM3 3h2v2h-2zM6 6h2v2h-2zM3 6h2v2h-2zM0 6h2v2h-2z" />
      </svg>
    </footer>
  </section>
);

export default function App() {
  return (
    <div className="relative flex h-screen flex-col overflow-hidden bg-white text-black">
      <header className="flex h-7 shrink-0 items-center gap-[6px] pl-2 font-['Open_Sans',sans-serif] text-[11px] text-[#999]">
        <svg width="16" height="16" viewBox="0 0 16 16">
          <circle cx="8" cy="9" r="4.500" fill="#ffd98a" />
          <path d="M3 13V9l1.500-1L6 9l1-3 1.500 2L10 6l1.500 3L13 8.500V13z" fill="#ffb000" />
          <path d="M3 10l2-1 2 1 2-2 2 2 2-1v2.500H3z" fill="#f03010" />
          <path d="M2 10V7a6 6 0 0 1 12 0v3" fill="none" stroke="#1818d8" strokeWidth="2" />
          <rect x="0" y="8" width="4" height="7" rx="2" fill="#1818d8" />
          <rect x="12" y="8" width="4" height="7" rx="2" fill="#1818d8" />
        </svg>
        <span>15 - Solar Sailer</span>
      </header>
      <nav className="flex h-[21px] shrink-0 items-center border-b-2 border-[#f0f0f0] pt-[2px] font-['Open_Sans',sans-serif] text-[11px] text-[#6d6d6d]">
        {MENUS.map((menu) => (
          <button key={menu} className="px-[7px]">
            {menu}
          </button>
        ))}
      </nav>
      <Toolbar />
      <Timeline />
      <main className="flex min-h-0 flex-1">
        <div className="w-[5px] shrink-0 border-r border-black bg-[#62648a]" />
        <TrackPanel />
        <AmplitudeRuler />
        <Waveforms />
      </main>
      <FrequencyAnalysis />
    </div>
  );
}
